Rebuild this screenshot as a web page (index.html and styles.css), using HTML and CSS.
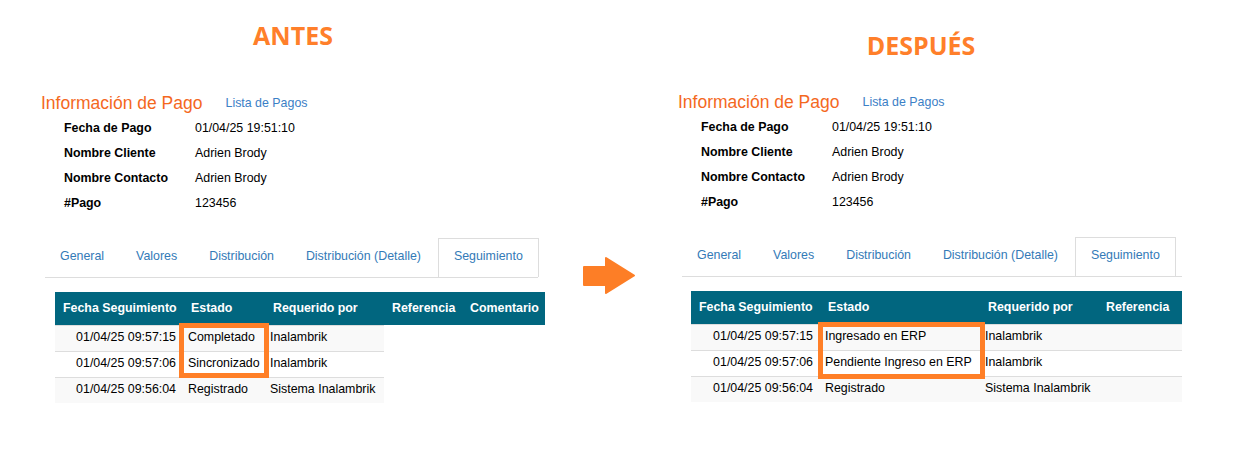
FILE: index.html
```html
<!DOCTYPE html>
<html>
    <head>
        <meta charset="utf-8">
        <title>Seguimiento - Antes / Después</title>

        <link rel="stylesheet" href="styles.css">
    </head>

    <body>
        <div class="compare">
            <div class="panel before">
                <div class="stageTitle">ANTES</div>
                <div class="payHead"><span class="payTitle">Información de Pago</span><a class="payLink" href="#">Lista de Pagos</a></div>
                <div class="payInfo">
                    <div class="infoRow"><span class="infoLabel">Fecha de Pago</span><span>01/04/25 19:51:10</span></div>
                    <div class="infoRow"><span class="infoLabel">Nombre Cliente</span><span>Adrien Brody</span></div>
                    <div class="infoRow"><span class="infoLabel">Nombre Contacto</span><span>Adrien Brody</span></div>
                    <div class="infoRow"><span class="infoLabel">#Pago</span><span>123456</span></div>
                </div>
                <ul class="tabs">
                    <li><a href="#">General</a></li>
                    <li><a href="#">Valores</a></li>
                    <li><a href="#">Distribución</a></li>
                    <li><a href="#">Distribución (Detalle)</a></li>
                    <li class="active"><a href="#">Seguimiento</a></li>
                </ul>
                <div class="trackWrap">
                    <table class="trackTable">
                        <thead>
                            <tr><th class="cDate">Fecha Seguimiento</th><th class="cState">Estado</th><th class="cReq">Requerido por</th><th class="cRef">Referencia</th><th class="cCom">Comentario</th></tr>
                        </thead>
                        <tbody>
                            <tr><td class="date">01/04/25 09:57:15</td><td>Completado</td><td>Inalambrik</td></tr>
                            <tr><td class="date">01/04/25 09:57:06</td><td>Sincronizado</td><td>Inalambrik</td></tr>
                            <tr><td class="date">01/04/25 09:56:04</td><td>Registrado</td><td>Sistema Inalambrik</td></tr>
                        </tbody>
                    </table>
                    <div class="mark"></div>
                </div>
            </div>

            <div class="arrowCol">
                <svg width="56" height="42" viewBox="0 0 56 42">
                    <polygon points="2,12 24,12 24,3 52,20.5 24,38 24,30 2,30" fill="#fd7e26" stroke="#fd7e26" stroke-width="2" stroke-linejoin="round"/>
                </svg>
            </div>

            <div class="panel after">
                <div class="stageTitle">DESPUÉS</div>
                <div class="payHead"><span class="payTitle">Información de Pago</span><a class="payLink" href="#">Lista de Pagos</a></div>
                <div class="payInfo">
                    <div class="infoRow"><span class="infoLabel">Fecha de Pago</span><span>01/04/25 19:51:10</span></div>
                    <div class="infoRow"><span class="infoLabel">Nombre Cliente</span><span>Adrien Brody</span></div>
                    <div class="infoRow"><span class="infoLabel">Nombre Contacto</span><span>Adrien Brody</span></div>
                    <div class="infoRow"><span class="infoLabel">#Pago</span><span>123456</span></div>
                </div>
                <ul class="tabs">
                    <li><a href="#">General</a></li>
                    <li><a href="#">Valores</a></li>
                    <li><a href="#">Distribución</a></li>
                    <li><a href="#">Distribución (Detalle)</a></li>
                    <li class="active"><a href="#">Seguimiento</a></li>
                </ul>
                <div class="trackWrap">
                    <table class="trackTable">
                        <thead>
                            <tr><th class="cDate">Fecha Seguimiento</th><th class="cState">Estado</th><th class="cReq">Requerido por</th><th class="cRef">Referencia</th><th class="cCom">Comentario</th></tr>
                        </thead>
                        <tbody>
                            <tr><td class="date">01/04/25 09:57:15</td><td>Ingresado en ERP</td><td>Inalambrik</td><td></td><td></td></tr>
                            <tr><td class="date">01/04/25 09:57:06</td><td>Pendiente Ingreso en ERP</td><td>Inalambrik</td><td></td><td></td></tr>
                            <tr><td class="date">01/04/25 09:56:04</td><td>Registrado</td><td>Sistema Inalambrik</td><td></td><td></td></tr>
                        </tbody>
                    </table>
                    <div class="mark"></div>
                </div>
            </div>
        </div>
    </body>
</html>
```

FILE: styles.css
```css
body {
    margin: 0;
    background-color: white;
    font-family: "Liberation Sans", Arial, sans-serif;
    font-size: 12.4px;
    color: #000;
}
.compare {
    display: flex;
    padding-left: 41px;
}
.panel {
    width: 504px;
    overflow: hidden;
    flex-shrink: 0;
}
.stageTitle {
    font-family: "Open Sans", sans-serif;
    font-weight: 700;
    font-size: 25px;
    line-height: 34px;
    color: #ff7f2a;
    text-align: center;
    margin-top: 18px;
}
.after .stageTitle {
    margin-top: 28px;
    padding-right: 18px;
}
.payHead {
    display: flex;
    align-items: center;
    margin-top: 41px;
}
.after .payHead {
    margin-top: 30px;
}
.payTitle {
    font-size: 17.5px;
    line-height: 20px;
    color: #f4681e;
}
.payLink {
    margin-left: 23px;
    line-height: 15px;
    color: #3b80c6;
    text-decoration: none;
}
.payInfo {
    margin-top: 3px;
    padding-left: 23px;
}
.infoRow {
    display: flex;
    line-height: 25px;
}
.infoLabel {
    width: 131px;
    font-weight: 700;
}
.tabs {
    display: flex;
    list-style: none;
    margin: 22px 0 0 4px;
    padding: 0;
    width: 493px;
    border-bottom: 1px solid #ddd;
}
.after .tabs {
    width: 500px;
}
.tabs li {
    margin-right: 2px;
    flex-shrink: 0;
}
.tabs a {
    display: block;
    padding: 9px 14px 12px;
    line-height: 17px;
    border: 1px solid transparent;
    border-bottom: 0;
    color: #337ab7;
    text-decoration: none;
    white-space: nowrap;
}
.tabs .active a {
    padding: 9px 15px 12px;
    border-color: #ddd;
    background-color: white;
}
.trackWrap {
    position: relative;
    margin: 14px 0 0 14px;
}
.after .trackWrap {
    margin-left: 13px;
}
.trackTable {
    border-collapse: separate;
    border-spacing: 0;
    table-layout: fixed;
    width: 491px;
    font-size: 12.4px;
}
.after .trackTable {
    width: 569px;
}
.trackTable th {
    box-sizing: border-box;
    background-color: #01667f;
    color: white;
    text-align: left;
    font-weight: 700;
    padding: 9px 8px 9px;
    line-height: 15px;
    white-space: nowrap;
}
.trackTable td {
    padding: 4px 5px 6px;
    line-height: 15px;
    border-top: 1px solid #ddd;
    white-space: nowrap;
}
.trackTable tbody tr:nth-child(odd) td {
    background-color: #f9f9f9;
}
.trackTable .date {
    text-align: right;
    padding-right: 7px;
}
.cDate { width: 128px; }
.cState { width: 82px; }
.cReq { width: 119px; }
.cRef { width: 78px; }
.cCom { width: 84px; }
.after .cDate { width: 129px; }
.after .cState { width: 160px; }
.after .cReq { width: 118px; }

/* orange box drawn over the changed states */
.mark {
    position: absolute;
    box-sizing: border-box;
    border: 5px solid #ff7f27;
}
.before .mark {
    left: 124px;
    top: 31px;
    width: 90px;
    height: 55px;
}
.after .mark {
    left: 127px;
    top: 31px;
    width: 167px;
    height: 57px;
}
.arrowCol {
    width: 96px;
    padding: 255px 0 0 37px;
    flex-shrink: 0;
}
```
